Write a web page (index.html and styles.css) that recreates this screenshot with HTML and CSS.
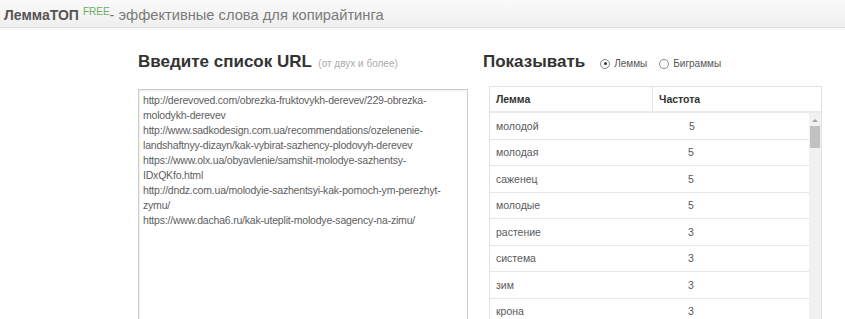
FILE: index.html
```html
<!DOCTYPE html>
<html lang="ru">
<head>
<meta charset="utf-8">
<title>ЛеммаТОП</title>
<link rel="stylesheet" href="styles.css">
</head>
<body>
<header class="topbar">
  <span class="brand">ЛеммаТОП</span><sup class="free">FREE</sup><span class="tagline">- эффективные слова для копирайтинга</span>
</header>
<main class="main">
  <section class="col-left">
    <h2 class="heading">Введите список URL <small class="hint">(от двух и более)</small></h2>
    <div class="textarea">
      <div>http://derevoved.com/obrezka-fruktovykh-derevev/229-obrezka-</div>
      <div>molodykh-derevev</div>
      <div>http://www.sadkodesign.com.ua/recommendations/ozelenenie-</div>
      <div>landshaftnyy-dizayn/kak-vybirat-sazhency-plodovyh-derevev</div>
      <div>https://www.olx.ua/obyavlenie/samshit-molodye-sazhentsy-</div>
      <div>IDxQKfo.html</div>
      <div>http://dndz.com.ua/molodyie-sazhentsyi-kak-pomoch-ym-perezhyt-</div>
      <div>zymu/</div>
      <div>https://www.dacha6.ru/kak-uteplit-molodye-sagency-na-zimu/</div>
    </div>
  </section>
  <section class="col-right">
    <div class="show-row">
      <h2 class="heading">Показывать</h2>
      <label class="radio"><span class="dot checked"></span>Леммы</label>
      <label class="radio"><span class="dot"></span>Биграммы</label>
    </div>
    <div class="table">
      <div class="thead">
        <div class="th c1">Лемма</div>
        <div class="th c2">Частота</div>
      </div>
      <div class="tbody">
        <div class="rows">
          <div class="tr"><div class="td c1">молодой</div><div class="td c2 first">5</div></div>
          <div class="tr"><div class="td c1">молодая</div><div class="td c2">5</div></div>
          <div class="tr"><div class="td c1">саженец</div><div class="td c2">5</div></div>
          <div class="tr"><div class="td c1">молодые</div><div class="td c2">5</div></div>
          <div class="tr"><div class="td c1">растение</div><div class="td c2">3</div></div>
          <div class="tr"><div class="td c1">система</div><div class="td c2">3</div></div>
          <div class="tr"><div class="td c1">зим</div><div class="td c2">3</div></div>
          <div class="tr"><div class="td c1">крона</div><div class="td c2">3</div></div>
        </div>
        <div class="scrollbar">
          <div class="arrow"></div>
          <div class="thumb"></div>
        </div>
      </div>
    </div>
  </section>
</main>
</body>
</html>
```
FILE: styles.css
```css
html, body {
  margin: 0;
  padding: 0;
  background: #fff;
  font-family: "Liberation Sans", Arial, sans-serif;
  overflow: hidden;
}

.topbar {
  height: 28px;
  box-sizing: border-box;
  border-bottom: 1px solid #dcdcdc;
  background: linear-gradient(#fafafa, #efefef);
  padding: 6px 0 0 4px;
  white-space: nowrap;
  box-shadow: 0 1px 2px rgba(0,0,0,0.06);
}

.brand {
  font-weight: bold;
  font-size: 14px;
  color: #555;
}

.free {
  font-size: 10px;
  color: #6aad5f;
  margin-left: 4px;
  vertical-align: 5px;
  line-height: 0;
}

.tagline {
  font-size: 14.7px;
  color: #7a7a7a;
}

.main {
  display: flex;
  padding: 24px 0 0 138px;
}

.col-left {
  width: 330px;
}

.col-right {
  margin-left: 15px;
  width: 337px;
}

.heading {
  margin: 0;
  font-size: 17px;
  line-height: 20px;
  font-weight: bold;
  color: #333;
  white-space: nowrap;
}

.hint {
  font-size: 10px;
  font-weight: normal;
  color: #aaa;
  margin-left: 2px;
}

.textarea {
  margin-top: 15px;
  height: 235px;
  box-sizing: border-box;
  border: 1px solid #ccc;
  box-shadow: inset 1px 1px 2px rgba(0,0,0,0.07);
  padding: 3px 4px;
  font-size: 10.5px;
  letter-spacing: -0.2px;
  line-height: 15px;
  color: #5e5e5e;
  white-space: nowrap;
}

.show-row {
  display: flex;
  align-items: center;
}

.radio {
  display: flex;
  align-items: center;
  font-size: 10px;
  color: #555;
  margin-left: 15px;
  padding-top: 3px;
}

.radio + .radio {
  margin-left: 12px;
}

.dot {
  width: 10px;
  height: 10px;
  border: 1px solid #888;
  border-radius: 50%;
  margin-right: 4px;
  box-sizing: border-box;
  position: relative;
  background: #fff;
}

.dot.checked::after {
  content: "";
  position: absolute;
  left: 2.5px;
  top: 2.5px;
  width: 3px;
  height: 3px;
  border-radius: 50%;
  background: #333;
}

.table {
  margin: 14px 0 0 6px;
  width: 331px;
  border: 1px solid #e2e2e2;
  border-bottom: none;
  font-size: 10.5px;
  color: #5a5a5a;
}

.thead {
  display: flex;
  height: 26px;
  box-sizing: border-box;
  border-bottom: 2px solid #eaeaea;
  font-weight: bold;
  color: #333;
}

.th {
  display: flex;
  align-items: center;
}

.th.c1 {
  width: 163px;
  padding-left: 6px;
  box-sizing: border-box;
  border-right: 1px solid #e6e6e6;
}

.th.c2 {
  padding-left: 6px;
}

.tbody {
  display: flex;
}

.rows {
  flex: 1;
}

.tr {
  display: flex;
  height: 26.5px;
  box-sizing: border-box;
  border-bottom: 1px solid #e6e6e6;
}

.td {
  display: flex;
  align-items: center;
}

.td.c1 {
  width: 198px;
  padding-left: 6px;
  box-sizing: border-box;
}

.td.first {
  padding-left: 1px;
}

.scrollbar {
  width: 12px;
  background: #f1f1f1;
  display: flex;
  flex-direction: column;
  align-items: center;
}

.arrow {
  width: 0;
  height: 0;
  margin-top: 6px;
  border-left: 3px solid transparent;
  border-right: 3px solid transparent;
  border-bottom: 3px solid #a3a3a3;
}

.thumb {
  margin-top: 4px;
  width: 10px;
  height: 22px;
  background: #c1c1c1;
}
```
